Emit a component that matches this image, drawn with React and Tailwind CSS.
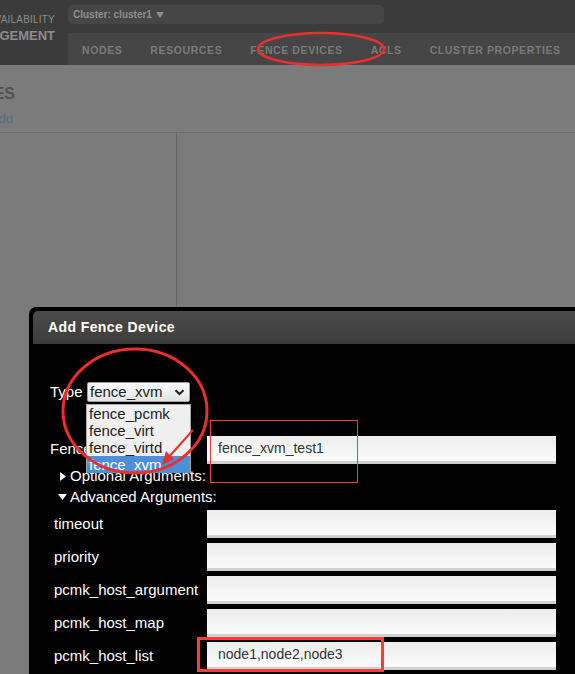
import React from "react";

const navItems = ["NODES", "RESOURCES", "FENCE DEVICES", "ACLS", "CLUSTER PROPERTIES"];
const rows = ["timeout", "priority", "pcmk_host_argument", "pcmk_host_map", "pcmk_host_list"];

function Field({ value }) {
  return (
    <div className="w-[349px] h-[28px] bg-gradient-to-b from-[#ececec] to-[#fbfbfb] border-b-[3px] border-[#d0d0d0] flex items-center pl-[11px] text-[14px] text-[#333] font-['Liberation_Sans',sans-serif]">
      {value}
    </div>
  );
}

export default function App() {
  return (
    <div className="relative w-[575px] h-[674px] overflow-hidden bg-[#7b7b7b] font-['Liberation_Sans',sans-serif]">
      {/* Header */}
      <div className="h-[65px] bg-[#3b3b3b] flex">
        <div className="w-[68px] shrink-0 overflow-hidden flex flex-col items-end pr-[13px] pt-[13px] text-[#8c8c8c]">
          <div className="text-[10px] leading-[14px] tracking-[0.2px] whitespace-nowrap">AVAILABILITY</div>
          <div className="text-[13px] leading-[17px] font-bold whitespace-nowrap">MANAGEMENT</div>
        </div>
        <div className="flex-1 flex flex-col min-w-0">
          <div className="mt-[5px] h-[19px] w-[316px] rounded-[5px] bg-[#464646] flex items-center pl-[5px] text-[10px] font-bold text-[#8e8e8e]">
            Cluster: cluster1
            <svg className="ml-[4px]" width="8" height="6" viewBox="0 0 8 6"><path d="M0 0 L8 0 L4 6 Z" fill="#8e8e8e" /></svg>
          </div>
          <div className="mt-[9px] h-[32px] bg-[#454545] flex items-center pt-[3px] pl-[14px] gap-[28px] whitespace-nowrap overflow-hidden text-[10.5px] font-bold tracking-[0.6px] text-[#7a7a7a]">
            {navItems.map((n) => (
              <span key={n}>{n}</span>
            ))}
          </div>
        </div>
      </div>

      {/* Page content */}
      <div className="relative">
        <div className="h-[68px] border-b border-[#6d6d6d] relative">
          <div className="absolute right-[calc(100%-15px)] top-[17px] text-[16px] font-bold text-[#515151] whitespace-nowrap">
            DEVICES
          </div>
          <div className="absolute right-[calc(100%-13px)] top-[44px] text-[13px] text-[#56708a] whitespace-nowrap">Add</div>
        </div>
        <div className="flex h-[180px]">
          <div className="w-[177px] border-r border-[#666]"></div>
          <div className="flex-1"></div>
        </div>
      </div>

      {/* Modal */}
      <div className="absolute left-[29px] top-[307px] w-[560px] h-[380px] bg-black rounded-tl-[7px] pl-[4px] pt-[4px]">
        <div className="h-[33px] rounded-tl-[5px] bg-gradient-to-b from-[#4b4b4b] to-[#3c3c3c] flex items-center pl-[15px] text-[14px] font-bold tracking-[0.4px] text-white">
          Add Fence Device
        </div>
        <div className="pl-[17px] pt-[38px] text-white text-[15px]">
          <div className="flex items-center h-[20px]">
            <span className="w-[37px]">Type</span>
            <div className="w-[103px] h-[20px] bg-gradient-to-b from-[#fafafa] to-[#e4e4e4] border border-[#a0a0a0] rounded-[2px] flex items-center justify-between pl-[2px] pr-[4px] text-[#222] text-[15px]">
              <span>fence_xvm</span>
              <svg width="11" height="7" viewBox="0 0 11 7"><path d="M1.5 1.2 L5.5 5 L9.5 1.2" fill="none" stroke="#222" strokeWidth="2" /></svg>
            </div>
          </div>
          <div className="flex items-center mt-[33px] h-[29px]">
            <span className="w-[157px] whitespace-nowrap">Fence Device Name</span>
            <Field value="fence_xvm_test1" />
          </div>
          <div className="flex items-center h-[20px] mt-[2px] pl-[10px]">
            <svg className="mr-[4px]" width="6" height="9" viewBox="0 0 6 9"><path d="M0 0 L6 4.5 L0 9 Z" fill="#fff" /></svg>
            <span>Optional Arguments:</span>
          </div>
          <div className="flex items-center h-[20px] mt-[1px] pl-[8px]">
            <svg className="mr-[3px]" width="9" height="6" viewBox="0 0 9 6"><path d="M0 0 L9 0 L4.5 6 Z" fill="#fff" /></svg>
            <span>Advanced Arguments:</span>
          </div>
          <div className="flex flex-col gap-[5px] mt-[3px] pl-[4px]">
            {rows.map((r) => (
              <div key={r} className="flex items-center h-[28px]">
                <span className="w-[153px]">{r}</span>
                <Field value={r === "pcmk_host_list" ? "node1,node2,node3" : ""} />
              </div>
            ))}
          </div>
        </div>
      </div>

      {/* Open dropdown list */}
      <div className="absolute left-[86px] top-[404px] w-[105px] h-[69px] bg-[#efefef] border border-[#a8a8a8] text-[15px] leading-[17px] text-[#222]">
        <div className="pl-[2px]">fence_pcmk</div>
        <div className="pl-[2px]">fence_virt</div>
        <div className="pl-[2px]">fence_virtd</div>
        <div className="pl-[2px] bg-[#4a8fd8] text-white">fence_xvm</div>
      </div>

      {/* Annotations */}
      <div className="absolute left-[210px] top-[420px] w-[148px] h-[63px] border border-[#ff3a3a]"></div>
      <div className="absolute left-[197px] top-[637px] w-[187px] h-[35px] border-[3px] border-[#ff3a3a]"></div>
      <svg className="absolute left-0 top-0" width="575" height="674" viewBox="0 0 575 674">
        <ellipse cx="321" cy="49" rx="63" ry="16" fill="none" stroke="#ee2d2d" strokeWidth="2.5" />
        <ellipse cx="135" cy="411" rx="72" ry="62" fill="none" stroke="#ee2d2d" strokeWidth="3" />
        <path d="M193 430 L168 458" stroke="#ee2d2d" strokeWidth="2" fill="none" />
        <path d="M162 465 L166 451 L174 459 Z" fill="#ee2d2d" />
      </svg>
    </div>
  );
}
